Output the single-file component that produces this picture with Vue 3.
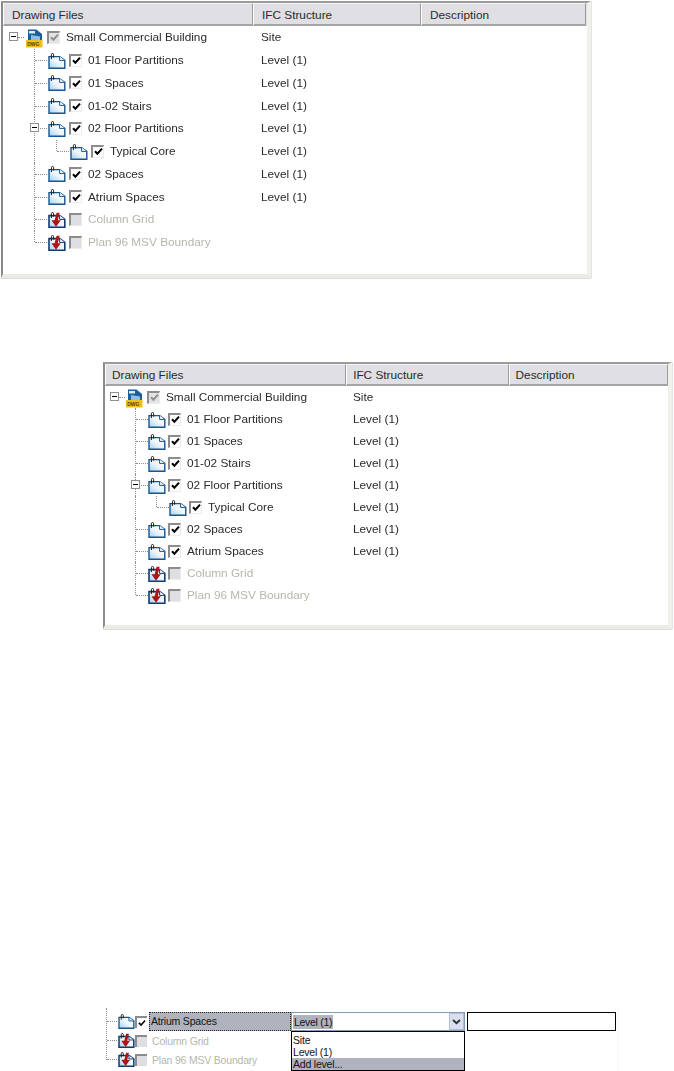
<script setup>
const rows = [
  { name: '01 Floor Partitions', ifc: 'Level (1)', depth: 1 },
  { name: '01 Spaces', ifc: 'Level (1)', depth: 1 },
  { name: '01-02 Stairs', ifc: 'Level (1)', depth: 1 },
  { name: '02 Floor Partitions', ifc: 'Level (1)', depth: 1, open: true },
  { name: 'Typical Core', ifc: 'Level (1)', depth: 2 },
  { name: '02 Spaces', ifc: 'Level (1)', depth: 1 },
  { name: 'Atrium Spaces', ifc: 'Level (1)', depth: 1 },
  { name: 'Column Grid', ifc: '', depth: 1, off: true },
  { name: 'Plan 96 MSV Boundary', ifc: '', depth: 1, off: true, end: true }
]
const allRows = [{ name: 'Small Commercial Building', ifc: 'Site', depth: 0, root: true, open: true }, ...rows]
const panels = [
  { cls: 'panel-a', cols: [250, 168, 165], rowH: 22.75, indent: 22, rootPad: 23 },
  { cls: 'panel-b', cols: [242, 163, 160], rowH: 22, indent: 21, rootPad: 22 }
]
const heads = ['Drawing Files', 'IFC Structure', 'Description']
const pad = (p, r) => (r.root ? p.rootPad : 23 + r.depth * p.indent)
</script>

<template>
  <div class="page">
    <svg class="defs" width="0" height="0">
      <defs>
        <linearGradient id="sheet" x1="1" y1="0" x2="0" y2="1">
          <stop offset="0" stop-color="#ffffff" />
          <stop offset="0.5" stop-color="#eef6fc" />
          <stop offset="1" stop-color="#a4cff1" />
        </linearGradient>
        <symbol id="layer" viewBox="0 0 18 16">
          <path d="M1 3.6H11.6L16.8 7.4V15.2H1Z" fill="url(#sheet)" stroke="#17568f" stroke-width="1.4" />
          <path d="M11.6 3.6V7.4H16.8" fill="#ffffff" stroke="#17568f" stroke-width="1" />
          <path d="M3.4 6V1.6a1.1 1.1 0 0 1 2.2 0V4.6" fill="none" stroke="#1a1a1a" stroke-width="1" />
        </symbol>
        <symbol id="unload" viewBox="0 0 18 16">
          <path d="M1 3.6H11.6L16.8 7.4V15.2H1Z" fill="url(#sheet)" stroke="#123b70" stroke-width="1.6" />
          <path d="M11.6 3.6V7.4H16.8" fill="#ffffff" stroke="#123b70" stroke-width="1" />
          <path d="M3.4 6V1.6a1.1 1.1 0 0 1 2.2 0V4.6" fill="none" stroke="#1a1a1a" stroke-width="1" />
          <path d="M11.6 0.8L9.8 8.2h3L8 14.8 3.4 8.2h3.2L8.6 0.8z" fill="#ad1414" />
        </symbol>
      </defs>
    </svg>

    <section v-for="p in panels" :key="p.cls" class="panel" :class="p.cls">
      <div class="head">
        <div v-for="(h, i) in heads" :key="h" class="head-cell" :style="{ width: p.cols[i] + 'px' }">{{ h }}</div>
      </div>
      <div class="body">
        <div
          v-for="r in allRows"
          :key="r.name"
          class="row"
          :class="{ off: r.off, root: r.root }"
          :style="{ height: p.rowH + 'px' }"
        >
          <div class="tree" :style="{ width: p.cols[0] + 'px', paddingLeft: pad(p, r) + 'px' }">
            <template v-if="r.depth >= 1">
              <span class="vline" :class="{ half: r.end }"></span>
              <span v-if="r.depth === 1" class="stub"></span>
            </template>
            <template v-if="r.depth === 2">
              <span class="vline half" :style="{ left: (31 + p.indent) + 'px' }"></span>
              <span class="stub" :style="{ left: (32 + p.indent) + 'px' }"></span>
            </template>
            <span v-if="r.root" class="stub root-stub"></span>
            <span v-if="r.open" class="toggle" :class="{ 'root-toggle': r.root }"></span>
            <svg v-if="r.root" class="dwg" width="17" height="19" viewBox="0 0 17 19">
              <path d="M2 0.5h8.5L16 5v7H2z" fill="#1d5f9e" />
              <path d="M3 2h6v2.5H3z" fill="#dcebf7" />
              <path d="M5 6l9 1.5V11H5z" fill="#8fbde3" />
              <rect x="0" y="11" width="16.5" height="7.5" fill="#f0bf1c" />
              <text x="1.2" y="17" class="dwg-text">DWG</text>
            </svg>
            <svg v-else class="sheet" width="18" height="16"><use :href="r.off ? '#unload' : '#layer'" /></svg>
            <span class="check" :class="{ gray: r.off, dim: r.root }">
              <svg v-if="!r.off" width="9" height="9" viewBox="0 0 9 9"><path d="M1 4.2l2.4 2.5L8 1.6" fill="none" stroke-width="2" /></svg>
            </span>
            <span class="label">{{ r.name }}</span>
          </div>
          <div class="ifc">{{ r.ifc }}</div>
        </div>
      </div>
    </section>

    <section class="snippet">
      <span class="snip-vline"></span>
      <div class="snip-row">
        <span class="snip-stub"></span>
        <svg class="snip-sheet" width="17" height="15"><use href="#layer" /></svg>
        <span class="snip-check"><svg width="8" height="8" viewBox="0 0 9 9"><path d="M1 4.2l2.4 2.5L8 1.6" fill="none" stroke="#000" stroke-width="1.8" /></svg></span>
        <span class="snip-name">Atrium Spaces</span>
        <div class="combo">
          <span class="combo-value">Level (1)</span>
          <span class="combo-btn"><svg width="9" height="6" viewBox="0 0 9 6"><path d="M1 1l3.5 3.2L8 1" fill="none" stroke="#333" stroke-width="2" /></svg></span>
          <div class="drop">
            <div class="drop-item">Site</div>
            <div class="drop-item">Level (1)</div>
            <div class="drop-item active">Add level...</div>
          </div>
        </div>
        <span class="snip-input"></span>
      </div>
      <div class="snip-row">
        <span class="snip-stub"></span>
        <svg class="snip-sheet" width="17" height="15"><use href="#unload" /></svg>
        <span class="snip-check gray"></span>
        <span class="snip-dim">Column Grid</span>
      </div>
      <div class="snip-row">
        <span class="snip-stub"></span>
        <svg class="snip-sheet" width="17" height="15"><use href="#unload" /></svg>
        <span class="snip-check gray"></span>
        <span class="snip-dim">Plan 96 MSV Boundary</span>
      </div>
    </section>
  </div>
</template>

<style>
html, body { background: #fff; }
</style>

<style scoped>
.page {
  width: 674px;
  height: 1071px;
  overflow: hidden;
  background: #fff;
  font-family: "Liberation Sans", Arial, sans-serif;
  font-size: 11.8px;
  color: #2a2a2a;
  padding-top: 1px;
  box-sizing: border-box;
}
.defs { position: absolute; }
.panel {
  box-sizing: border-box;
  background: #fff;
  border-top: 2px solid #9c9c9c;
  border-left: 2px solid #8a8a8a;
  border-right: 4px solid #f1f0ea;
  border-bottom: 4px solid #ecebe4;
  box-shadow: 0 1px 0 #dcdce2, 1px 0 0 #e4e4ea;
  filter: blur(0.3px);
}
.panel-a { width: 590px; height: 277px; margin-left: 1px; }
.panel-b { width: 569px; height: 267px; margin-left: 103px; margin-top: 84px; }
.panel-b .body { margin-left: -1px; }
.head { display: flex; height: 23px; background: #e0dfe3; }
.panel-b .head { height: 22px; }
.head-cell {
  box-sizing: border-box;
  padding: 1px 0 0 8px;
  line-height: 20px;
  white-space: nowrap;
  border-top: 1px solid #f4f4f4;
  border-left: 1px solid #fff;
  border-right: 1px solid #9a9a9a;
  border-bottom: 2px solid #a4a4a4;
}
.panel-b .head-cell { padding-left: 6px; line-height: 19px; }
.row { display: flex; align-items: center; position: relative; }
.tree { box-sizing: border-box; display: flex; align-items: center; flex: none; }
.ifc { padding-left: 8px; white-space: nowrap; }
.panel-b .ifc { padding-left: 7px; }
.off .label { color: #b7b6ab; }
.vline {
  position: absolute;
  left: 31px;
  top: 0;
  bottom: 0;
  width: 0;
  border-left: 1px dotted #8d8d8d;
}
.vline.half { bottom: 50%; }
.stub {
  position: absolute;
  left: 32px;
  width: 12px;
  top: 50%;
  height: 0;
  border-top: 1px dotted #8d8d8d;
}
.root-stub { left: 15px; width: 6px; }
.toggle {
  position: absolute;
  left: 27px;
  top: 50%;
  margin-top: -5px;
  width: 9px;
  height: 9px;
  box-sizing: border-box;
  border: 1px solid #8f8f8f;
  background: linear-gradient(#000, #000) center / 5px 1px no-repeat, #fff;
}
.root-toggle { left: 6px; }
.dwg { flex: none; margin-right: 4px; margin-top: 2px; }
.dwg-text { font-size: 5px; font-weight: 700; fill: #5b4300; font-family: "Liberation Sans", sans-serif; }
.sheet { flex: none; margin-right: 3px; margin-top: 1px; }
.panel-b .sheet { margin-right: 2px; }
.check {
  flex: none;
  box-sizing: border-box;
  width: 13px;
  height: 13px;
  margin-right: 6px;
  display: flex;
  align-items: center;
  justify-content: center;
  background: #fff;
  border-top: 2px solid #8c8c8c;
  border-left: 2px solid #8c8c8c;
  border-right: 1px solid #ececec;
  border-bottom: 1px solid #ececec;
}
.check svg { stroke: #000; }
.check.dim { background: #e3e3e3; }
.check.dim svg { stroke: #8f8f8f; }
.check.gray { background: #dfdfe3; }
.label { white-space: nowrap; }

.snippet {
  position: relative;
  width: 512px;
  height: 63px;
  margin-left: 106px;
  margin-top: 379px;
  padding-top: 4px;
  font-size: 10.5px;
  letter-spacing: -0.2px;
  border-right: 1px solid #f8f8f3;
}
.snip-vline {
  position: absolute;
  left: 0;
  top: 0;
  height: 52px;
  border-left: 1px dotted #8d8d8d;
}
.snip-row { display: flex; align-items: center; height: 19px; position: relative; }
.snip-stub { width: 10px; margin-left: 1px; margin-right: 1px; border-top: 1px dotted #8d8d8d; flex: none; }
.snip-sheet { flex: none; }
.snip-check {
  flex: none;
  box-sizing: border-box;
  width: 12px;
  height: 12px;
  display: flex;
  align-items: center;
  justify-content: center;
  background: #fff;
  border-top: 2px solid #8c8c8c;
  border-left: 2px solid #8c8c8c;
}
.snip-check.gray { background: #dfdfe3; }
.snip-name {
  box-sizing: border-box;
  width: 142px;
  height: 19px;
  margin-left: 2px;
  padding-left: 1px;
  line-height: 17px;
  background: #b0b2bd;
  border: 1px dotted #222;
  color: #111;
  white-space: nowrap;
}
.snip-dim { margin-left: 5px; color: #b7b6ab; white-space: nowrap; }
.combo {
  box-sizing: border-box;
  position: relative;
  width: 174px;
  height: 19px;
  border: 1px solid #7f9db9;
  display: flex;
  align-items: center;
  padding-left: 1px;
  flex: none;
}
.combo-value { background: #b0b2bd; padding: 0 1px; line-height: 14px; letter-spacing: -0.3px; color: #111; }
.combo-btn {
  position: absolute;
  right: 0;
  top: 0;
  bottom: 0;
  width: 15px;
  box-sizing: border-box;
  background: #d9dfee;
  border: 1px solid #b6bfd2;
  display: flex;
  align-items: center;
  justify-content: center;
}
.drop {
  position: absolute;
  left: -1px;
  top: 18px;
  width: 174px;
  box-sizing: border-box;
  border: 1px solid #000;
  background: #fff;
  padding-top: 2px;
  color: #111;
}
.drop-item { height: 12px; line-height: 12px; padding-left: 1px; }
.drop-item.active { background: #b0b2bd; }
.snip-input {
  box-sizing: border-box;
  width: 149px;
  height: 19px;
  margin-left: 2px;
  border: 1px solid #000;
  flex: none;
}
</style>
